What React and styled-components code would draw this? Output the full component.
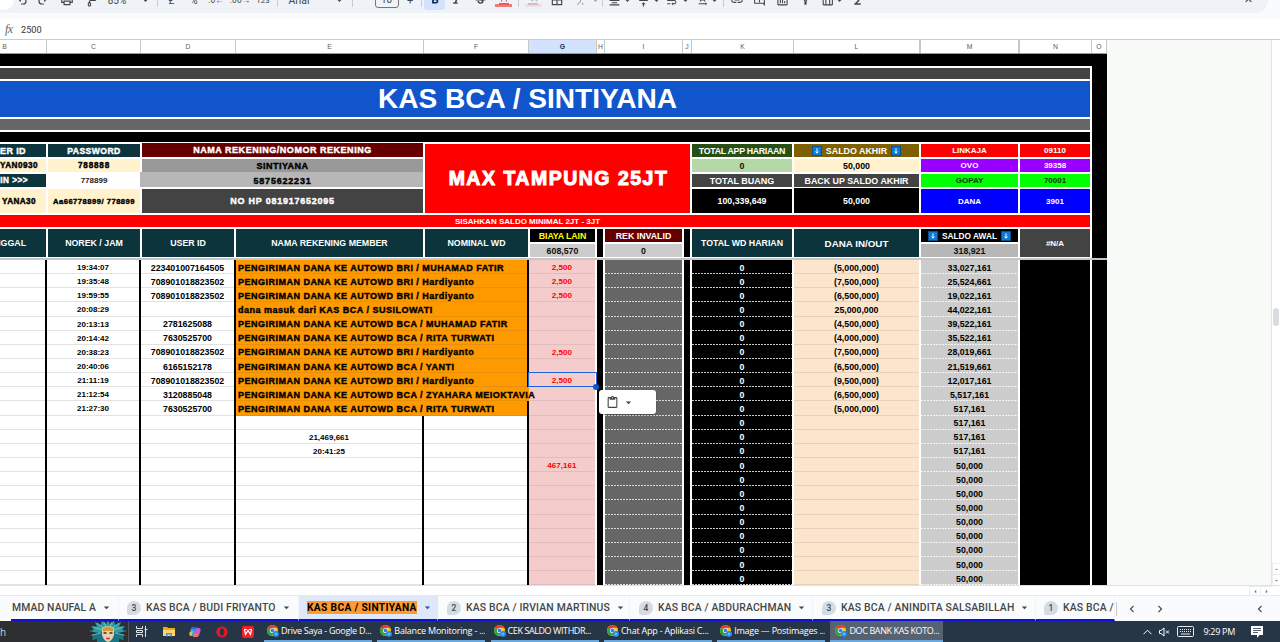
import React from 'react';
import styled, { createGlobalStyle, css } from 'styled-components';
import { Undo2, Redo2, PaintRoller } from 'lucide-react';
import {
    MdOutlinePrint, MdArrowDropDown, MdFormatBold, MdFormatItalic,
    MdStrikethroughS, MdFormatColorText, MdFormatColorFill, MdBorderAll, MdCallMerge, MdFormatAlignCenter,
    MdVerticalAlignCenter, MdWrapText, MdTextRotationNone, MdLink, MdOutlineAddComment, MdInsertChartOutlined,
    MdOutlineFilterAlt, MdOutlineTableChart, MdFunctions, MdExpandLess, MdChevronLeft, MdChevronRight,
    MdArrowDropUp, MdArrowLeft, MdArrowRight, MdContentPaste
} from 'react-icons/md';

const GlobalStyle = createGlobalStyle`
    * { box-sizing: border-box; }
    body {
        margin: 0;
        overflow: hidden;
        background: #fff;
        font-family: 'Liberation Sans', Arial, sans-serif;
    }
`;

const heavy = css`
    -webkit-text-stroke: ${p => (p.$size > 12 ? 1 : 0.4)}px currentColor;
`;

const Page = styled.div`
    width: 1280px;
    height: 642px;
    display: flex;
    flex-direction: column;
    overflow: hidden;
`;

/* toolbar */

const ToolbarArea = styled.div`
    height: 19px;
    flex: none;
    background: #f9fbfd;
    overflow: hidden;
`;

const Toolbar = styled.div`
    width: 1268px;
    height: 13px;
    background: #eff3f8;
    border-radius: 0 0 14px 0;
    overflow: hidden;
`;

const ToolRow = styled.div`
    display: flex;
    align-items: center;
    height: 26px;
    margin-top: -13px;
    color: #444746;
    font-size: 10px;
`;

const Slot = styled.div`
    width: 0;
    flex: none;
    display: flex;
    justify-content: center;
    align-items: center;
    white-space: nowrap;
    font-family: Roboto, sans-serif;
    font-size: ${p => p.$size || 10}px;
    margin-left: ${p => p.$gap}px;
    svg { flex: none; }
`;

const Knob = styled.div`
    width: 20px;
    height: 20px;
    flex: none;
    border-radius: 50%;
    background: #fff;
`;

const Rule = styled.div`
    width: 1px;
    flex: none;
    height: 13px;
    background: #c7cad0;
`;

const SizeBox = styled.div`
    width: 24px;
    height: 16px;
    flex: none;
    border: 1px solid #747775;
    border-radius: 3px;
    text-align: center;
    line-height: 14px;
`;

const Pressed = styled.div`
    width: 21px;
    height: 20px;
    flex: none;
    border-radius: 3px;
    background: #d3e3fd;
    color: #0b2a5b;
    display: flex;
    align-items: center;
    justify-content: center;
`;

const Swatch = styled.div`
    width: 17px;
    height: 13px;
    flex: none;
    display: flex;
    align-items: center;
    justify-content: center;
    border-bottom: 3px solid ${p => p.$color};
    color: ${p => p.$ink};
`;

const FormulaBar = styled.div`
    height: 21px;
    flex: none;
    display: flex;
    align-items: center;
    gap: 6px;
    padding-left: 5px;
    border-bottom: 1px solid #c9cbcd;
    font-family: Roboto, sans-serif;
    font-size: 9.2px;
    color: #333;
`;

const Fx = styled.span`
    width: 10px;
    font-family: 'Liberation Serif', serif;
    font-style: italic;
    font-size: 12px;
    letter-spacing: -0.5px;
    color: #666;
`;

/* sheet */

const Main = styled.div`
    display: flex;
    height: 545px;
    flex: none;
`;

const Sheet = styled.div`
    width: 1107px;
    flex: none;
    overflow: hidden;
`;

const Letters = styled.div`
    display: flex;
    height: 14px;
    border-bottom: 1px solid #9a9a9a;
`;

const Letter = styled.div`
    width: ${p => p.$w}px;
    flex: none;
    border-right: ${p => p.$edge || 1}px solid #c8c8c8;
    background: ${p => (p.$on ? '#d3e3fd' : '#fff')};
    color: ${p => (p.$on ? '#0b2a5b' : '#575b5f')};
    font-size: 6.8px;
    font-weight: ${p => (p.$on ? 700 : 400)};
    line-height: 14px;
    text-align: center;
    padding-right: ${p => p.$shift || 0}px;
`;

const Frozen = styled.div`
    display: flex;
    height: 204px;
    background: #000;
`;

const Board = styled.div`
    width: 1092px;
    margin-top: 12px;
    padding: 2px 2px 1px 0;
    background: #fff;
    display: grid;
    gap: 2px;
    grid-template-columns: 46px 92px 92px 187px 103px 65px 6px 77px 6px 100px 125px 97px 70px;
    grid-template-rows: 11px 36px 11px 10px 13px 13px 13px 24px 12px 13px 13px;
`;

const Box = styled.div`
    grid-column: ${p => p.$c};
    grid-row: ${p => p.$r};
    display: flex;
    align-items: center;
    justify-content: ${p => (p.$end ? 'flex-end' : 'center')};
    min-width: 0;
    overflow: hidden;
    white-space: nowrap;
    gap: 4px;
    background: ${p => p.$bg};
    color: ${p => p.$fg || '#fff'};
    font-size: ${p => p.$size || 9}px;
    font-weight: 700;
    ${p => p.$heavy && heavy}
    letter-spacing: ${p => p.$ls || 0}px;
    padding: ${p => p.$pad || '0'};
    margin: ${p => p.$m || '0'};
`;

const Note = styled.i`
    align-self: flex-start;
    margin-left: auto;
    border-top: 3px solid #f00;
    border-left: 3px solid transparent;
`;

const Center = styled.span`
    margin-left: auto;
    padding-left: 7px;
`;

const Divider = styled.div`
    height: 2px;
    background: #c6c6c8;
`;

const Body = styled.div`
    display: flex;
    height: 325px;
    overflow: hidden;
`;

const Column = styled.div`
    width: ${p => p.$w}px;
    flex: none;
    position: relative;
    z-index: ${p => p.$z || 0};
`;

const Cell = styled.div`
    position: relative;
    z-index: ${p => p.$z || 0};
    height: 14.15px;
    display: flex;
    align-items: center;
    justify-content: ${p => (p.$left ? 'flex-start' : 'center')};
    padding-top: 1px;
    padding-left: ${p => (p.$left ? '2px' : 0)};
    white-space: nowrap;
    border-right: 2px solid ${p => p.$edge};
    background-color: ${p => p.$bg};
    background-image: ${p => p.$line};
    background-size: 100% 1px;
    background-position: 0 100%;
    background-repeat: no-repeat;
    background-origin: padding-box;
    color: ${p => p.$fg || '#000'};
    font-size: ${p => p.$size || 8.8}px;
    font-weight: 700;
    ${p => p.$heavy && heavy}
    letter-spacing: ${p => p.$ls || 0}px;
`;

const Selection = styled.div`
    position: absolute;
    left: -1px;
    top: -1px;
    width: 69px;
    height: 15px;
    border: 1px solid #1a62e0;
`;

const Handle = styled.div`
    position: absolute;
    right: -3px;
    bottom: -4px;
    width: 6px;
    height: 6px;
    border-radius: 50%;
    background: #0b57d0;
`;

const PasteChip = styled.div`
    position: absolute;
    left: 70px;
    top: 17px;
    width: 57px;
    height: 24px;
    border-radius: 3px;
    background: #fff;
    box-shadow: 0 1px 2px rgba(0, 0, 0, 0.3);
    display: flex;
    align-items: center;
    gap: 3px;
    padding-left: 7px;
    color: #444746;
`;

const Blank = styled.div`
    flex: 1;
    background: #f8faf8;
    border-right: 1px solid #e1e3e1;
`;

const Scroller = styled.div`
    width: 8px;
    display: flex;
    flex-direction: column;
    justify-content: space-between;
    background: #fff;
`;

const Thumb = styled.div`
    height: 18px;
    margin: 268px 1px 0;
    border-radius: 4px;
    background: #dadce0;
`;

const ScrollButton = styled.div`
    display: flex;
    align-items: center;
    justify-content: center;
    width: ${p => p.$w}px;
    height: ${p => p.$h}px;
    border: 1px solid #ebedee;
    border-width: 1px 0 0 1px;
    color: #777;
`;

const BottomScroll = styled.div`
    height: 10px;
    flex: none;
    display: flex;
    justify-content: flex-end;
    padding-right: 8px;
    border-top: 1px solid #e1e3e1;
`;

/* sheet tabs */

const TabStrip = styled.div`
    height: 26px;
    flex: none;
    display: flex;
    align-items: stretch;
    padding-left: 11px;
    border-top: 1px solid #e8eaed;
    background: #f9fbfd;
    color: #444746;
`;

const Tab = styled.div`
    width: ${p => p.$w}px;
    flex: none;
    display: flex;
    align-items: center;
    overflow: hidden;
    white-space: nowrap;
    padding-left: ${p => (p.$pad === undefined ? 8 : p.$pad)}px;
    background: ${p => (p.$on ? '#dfe8f8' : 'transparent')};
    border-bottom: 2px solid #0f0fe0;
    border-right: 1px solid ${p => (p.$on ? '#dfe8f8' : '#f1f3f8')};
    font-family: Roboto, sans-serif;
    font-size: 10.4px;
    font-weight: 500;
    letter-spacing: ${p => p.$ls || 0.17}px;
    svg { margin-left: 4px; flex: none; color: ${p => (p.$on ? '#0b57d0' : '#444746')}; }
`;

const Badge = styled.span`
    width: 14px;
    height: 14px;
    flex: none;
    margin-right: 5px;
    border-radius: 7px 7px 7px 2px;
    background: #d3dbe5;
    font-size: 8.5px;
    line-height: 14px;
    text-align: center;
    letter-spacing: 0;
`;

const Marked = styled.span`
    background: #ff9a2e;
    color: #000;
    font-weight: 700;
    font-size: 10.2px;
    line-height: 13px;
    letter-spacing: 0.35px;
`;

const Pager = styled.div`
    flex: 1;
    display: flex;
    align-items: center;
    gap: 14px;
    padding: 0 13px 0 8px;
    svg:last-child { margin-left: auto; }
`;

const PagerRule = styled.div`
    width: 1px;
    height: 14px;
    margin-left: 1px;
    align-self: center;
    background: #c7cad0;
`;

/* taskbar */

const Taskbar = styled.div`
    height: 21px;
    flex: none;
    display: flex;
    background: #273647;
    color: #fff;
    font-family: 'Open Sans', 'Noto Sans', sans-serif;
    font-size: 9px;
`;

const Search = styled.div`
    width: 129px;
    flex: none;
    display: flex;
    align-items: center;
    justify-content: space-between;
    background: #2e2f31;
    border-right: 1px solid #525558;
    padding-right: 1px;
    color: #d0d0d0;
    font-size: 10px;
`;

const Pinned = styled.div`
    width: 135px;
    flex: none;
    display: flex;
    align-items: center;
    justify-content: space-between;
    padding: 0 10px 0 6px;
`;

const Task = styled.div`
    width: ${p => p.$w || 108}px;
    flex: none;
    margin-right: 5.3px;
    display: flex;
    align-items: center;
    gap: 2px;
    padding-left: ${p => (p.$on ? 5 : 3)}px;
    white-space: nowrap;
    overflow: hidden;
    letter-spacing: ${p => p.$ls}px;
    background: ${p => (p.$on ? '#56626f' : 'transparent')};
    border-bottom: 2px solid #6aa9dd;
    svg { flex: none; }
`;

const Tray = styled.div`
    flex: 1;
    display: flex;
    align-items: center;
    justify-content: flex-end;
    gap: 7px;
    padding-right: 17px;
    letter-spacing: -0.3px;
`;

const Clock = styled.span`
    margin: 0 9px 0 2px;
`;

const DownEmoji = () => (
    <svg width="10" height="10" viewBox="0 0 10 10">
        <rect x="0.5" y="0.5" width="9" height="9" fill="#0a7bdc" stroke="#0b4f8e" />
        <path d="M5 2.4v4.4M3.6 5.6L5 7.2l1.4-1.6" stroke="#fff" strokeWidth="1" fill="none" />
    </svg>
);

const Chrome = () => (
    <svg width="12" height="12" viewBox="0 0 24 24">
        <circle cx="11" cy="11" r="11" fill="#fbc116" />
        <path d="M11 11L1.5 5.5A11 11 0 0 1 20.5 5.5H11z" fill="#e33b2e" />
        <path d="M11 11L1.5 5.5A11 11 0 0 0 10 22l5-9z" fill="#2aa14c" />
        <circle cx="11" cy="11" r="5.2" fill="#fff" />
        <circle cx="11" cy="11" r="4" fill="#3b7ded" />
        <circle cx="18" cy="18" r="6" fill="#1e88e5" />
        <path d="M15 18h6M18 15v6" stroke="#9ad8ff" strokeWidth="1.5" />
    </svg>
);

const Mask = () => (
    <svg width="38" height="21" viewBox="0 0 38 21">
        <g fill="#2c9fa6">
            <path d="M19 14L0 10l5-1-3-4 6 1-2-5 6 3 1-4 4 3 2-3 2 3 4-3 1 4 6-3-2 5 6-1-3 4 5 1z" />
            <path d="M19 9L0 15l4 0-1 4 5-1 0 3h22l0-3 5 1-1-4 4 0z" fill="#1c7585" />
        </g>
        <g stroke="#7fd6cf" strokeWidth="0.7">
            <path d="M13 9L5 6M14 7L8 2M17 6l-2-5M25 9l8-3M24 7l6-5M21 6l2-5M12 12l-9 2M26 12l9 2" />
        </g>
        <path d="M13 7q6-4 12 0v7q-2 6-6 7q-4-1-6-7z" fill="#e9cfae" />
        <path d="M13 8q6-5 12 0l-2 3q-1-2-4-1q-3-1-4 1z" fill="#d8962e" />
        <path d="M14.5 12h3M20.500 12h3" stroke="#3b2b2b" strokeWidth="1.4" />
        <path d="M17.200 17.500h3.600" stroke="#c92c35" strokeWidth="1.600" />
    </svg>
);

const TaskView = () => (
    <svg width="13" height="11" viewBox="0 0 13 11" fill="none" stroke="#dfe4ea">
        <path d="M1.500 0v2.500h6V0M1.500 11V8.500h6V11M1.500 4.500h6v2h-6zM10.500 0v11M9.500 3.500h3" />
    </svg>
);

const Folder = () => (
    <svg width="12" height="11" viewBox="0 0 12 11">
        <path d="M0 1h4l1 1h7v8H0z" fill="#e8a92c" />
        <path d="M0 4h12v6H0z" fill="#ffd768" />
        <path d="M3 7h6v3.500H7.500V8.500h-3v2H3z" fill="#3f9be8" />
    </svg>
);

const Copilot = () => (
    <svg width="12" height="12" viewBox="0 0 12 12">
        <path d="M4 1h4L5.500 10H2.500Q0 10 .5 7L2 3Q2.500 1 4 1z" fill="#27a6e0" />
        <path d="M1 6l3-1-1.500 5Q0 10 .5 7z" fill="#f0b93a" />
        <path d="M8 11H4L6.500 2h3Q12 2 11.500 5L10 9Q9.500 11 8 11z" fill="#c35be0" />
        <path d="M8 11H4l1-4 5 1z" fill="#f0715c" />
        <path d="M4 1h4l-.6 2.200L3 3z" fill="#2b5fd9" />
    </svg>
);

const Opera = () => (
    <svg width="12" height="12" viewBox="0 0 12 12">
        <circle cx="6" cy="6" r="5.600" fill="#e8152b" />
        <ellipse cx="6" cy="6" rx="2.200" ry="3.800" fill="#273647" />
    </svg>
);

const Wps = () => (
    <svg width="12" height="12" viewBox="0 0 12 12">
        <rect width="12" height="12" rx="2" fill="#f0202c" />
        <path d="M2 3.500h3M2.500 3.500l1 5 2.500-4 2.500 4 1-5M7 3.500h3" stroke="#fff" strokeWidth="1.200" fill="none" />
    </svg>
);

const Keyboard = () => (
    <svg width="17" height="11" viewBox="0 0 17 11" fill="none" stroke="#e8ebee">
        <rect x="0.500" y="0.500" width="16" height="10" rx="1" />
        <path d="M3 3.500h11M3 5.500h11" strokeDasharray="1 1" />
        <path d="M4 8h9" />
    </svg>
);

const Speaker = () => (
    <svg width="11" height="10" viewBox="0 0 11 10" fill="none" stroke="#fff">
        <path d="M.5 3.500H2L5 1v8L2 6.500H.5zM7 3.500l3 3M10 3.500l-3 3" />
    </svg>
);

const Bubble = () => (
    <svg width="12" height="12" viewBox="0 0 12 12">
        <path d="M0 0h12v9H8.500L6 12V9H0z" fill="#fff" />
        <path d="M2 2.500h8M2 4.500h8M2 6.500h5" stroke="#273647" strokeWidth=".8" />
    </svg>
);

const TrayArrow = () => (
    <svg width="9" height="6" viewBox="0 0 9 6" fill="none" stroke="#fff">
        <path d="M.5 5.200l4-4 4 4" />
    </svg>
);

const caret = <MdArrowDropDown size={11} />;
const rule = <Rule />;

// [center x, content, font size]
const tools = [
    [4, <Knob />],
    [22, <Undo2 size={12} strokeWidth={2.4} />],
    [43, <Redo2 size={12} strokeWidth={2.4} />],
    [66.5, <MdOutlinePrint size={14} />],
    [90.5, <PaintRoller size={13} />],
    [117, '85%'],
    [145, caret],
    [157.5, rule],
    [171.5, '£'],
    [194, '%'],
    [216, '.0←', 8.5],
    [240, '.00→', 8.5],
    [263, '123', 8],
    [277.5, rule],
    [299, 'Arial', 10.4],
    [339, caret],
    [352.5, rule],
    [386.5, <SizeBox>10</SizeBox>],
    [410, '+', 11],
    [421.5, rule],
    [434.5, <Pressed><MdFormatBold size={14} /></Pressed>],
    [456.5, <MdFormatItalic size={13} />],
    [480, <MdStrikethroughS size={13} />],
    [503.5, <Swatch $color="#ee7a7a" $ink="#e06060"><MdFormatColorText size={12} /></Swatch>],
    [518, rule],
    [533, <Swatch $color="#f3dcde" $ink="#c9c0c4"><MdFormatColorFill size={12} /></Swatch>],
    [556.5, <MdBorderAll size={14} />],
    [580, <MdCallMerge size={13} color="#aaa" />],
    [595, <MdArrowDropDown size={11} color="#aaa" />],
    [602.5, rule],
    [614.5, <MdFormatAlignCenter size={13} />],
    [627.5, caret],
    [643.5, <MdVerticalAlignCenter size={13} />],
    [656, caret],
    [671.5, <MdWrapText size={13} />],
    [685.5, caret],
    [702, <MdTextRotationNone size={13} />],
    [714, caret],
    [723.5, rule],
    [737, <MdLink size={14} />],
    [759.5, <MdOutlineAddComment size={13} />],
    [782, <MdInsertChartOutlined size={13} />],
    [805, <MdOutlineFilterAlt size={13} />],
    [827, <MdOutlineTableChart size={13} />],
    [839.5, caret],
    [857, <MdFunctions size={13} />],
    [1248.5, <MdExpandLess size={13} />]
];

const letters = [
    ['B', 47, 37], ['C', 94], ['D', 95], ['E', 188], ['F', 105], ['G', 68], ['H', 8], ['I', 78], ['J', 9],
    ['K', 102], ['L', 127], ['M', 99], ['N', 72], ['O', 15]
];

const solid = c => `linear-gradient(${c}, ${c})`;
const dots = c => `repeating-linear-gradient(90deg, ${c} 0 2px, transparent 2px 3px)`;

const times = ['19:34:07', '19:35:48', '19:59:55', '20:08:29', '20:13:13', '20:14:42', '20:38:23', '20:40:06',
    '21:11:19', '21:12:54', '21:27:30'];

const users = ['223401007164505', '708901018823502', '708901018823502', '', '2781625088', '7630525700',
    '708901018823502', '6165152178', '708901018823502', '3120885048', '7630525700'];

const names = [
    'PENGIRIMAN DANA KE AUTOWD BRI / MUHAMAD FATIR',
    'PENGIRIMAN DANA KE AUTOWD BRI / Hardiyanto',
    'PENGIRIMAN DANA KE AUTOWD BRI / Hardiyanto',
    'dana masuk dari KAS BCA / SUSILOWATI',
    'PENGIRIMAN DANA KE AUTOWD BCA / MUHAMAD FATIR',
    'PENGIRIMAN DANA KE AUTOWD BCA / RITA TURWATI',
    'PENGIRIMAN DANA KE AUTOWD BRI / Hardiyanto',
    'PENGIRIMAN DANA KE AUTOWD BCA / YANTI',
    'PENGIRIMAN DANA KE AUTOWD BRI / Hardiyanto',
    'PENGIRIMAN DANA KE AUTOWD BCA / ZYAHARA MEIOKTAVIA',
    'PENGIRIMAN DANA KE AUTOWD BCA / RITA TURWATI'
];

const extra = { 12: '21,469,661', 13: '20:41:25' };
const fees = { 0: '2,500', 1: '2,500', 2: '2,500', 6: '2,500', 8: '2,500', 14: '467,161' };

const flows = ['(5,000,000)', '(7,500,000)', '(6,500,000)', '25,000,000', '(4,500,000)', '(4,000,000)',
    '(7,500,000)', '(6,500,000)', '(9,500,000)', '(6,500,000)', '(5,000,000)'];

const balances = ['33,027,161', '25,524,661', '19,022,161', '44,022,161', '39,522,161', '35,522,161', '28,019,661',
    '21,519,661', '12,017,161', '5,517,161', '517,161', '517,161', '517,161', '517,161'];

const rows = Array.from({ length: 23 }, (_, i) => i);
const white = { $bg: '#fff', $edge: '#000', $line: solid('#e2e2e2') };
const orange = { $bg: '#ff9900', $edge: '#ff9900', $line: solid('#e88f0c') };
const black = { $bg: '#000', $edge: '#fff', $line: 'none' };

const teal = '#0c343d';
const cream = '#fff2cc';

// [title, letter spacing]
const tasks = [
    ['Drive Saya - Google D...', -0.27],
    ['Balance Monitoring - ...', -0.2],
    ['CEK SALDO WITHDR...', -0.42],
    ['Chat App - Aplikasi C...', -0.22],
    ['Image — Postimages ...', -0.25]
];

const SheetHead = () => (
    <Frozen>
        <Board>
            <Box $c="1 / -1" $r="1" $bg="#434343" />
            <Box $c="1 / -1" $r="2" $bg="#1155cc" $size={28.1} $pad="0 35px 0 0">KAS BCA / SINTIYANA</Box>
            <Box $c="1 / -1" $r="3" $bg="#666666" />
            <Box $c="1 / -1" $r="4" $bg="#000" />

            <Box $c="1" $r="5" $bg={teal} $heavy $size={9} $ls={0.4} $end $pad="0 20px 0 0">ER ID</Box>
            <Box $c="1" $r="6" $bg={cream} $fg="#000" $heavy $size={8.2} $ls={0.45} $end $pad="0 8px 0 0">YAN0930</Box>
            <Box $c="1" $r="7" $bg={teal} $heavy $size={8.2} $ls={0.5} $end $pad="0 18px 0 0">IN &gt;&gt;&gt;</Box>
            <Box $c="1" $r="8" $bg={cream} $fg="#000" $heavy $size={8.2} $ls={0.4} $end $pad="0 10px 0 0">YANA30</Box>

            <Box $c="2" $r="5" $bg={teal} $heavy $size={8.6} $ls={0.45}>PASSWORD</Box>
            <Box $c="2" $r="6" $bg={cream} $fg="#000" $heavy $size={8.2} $ls={0.8}>788888</Box>
            <Box $c="2" $r="7" $bg="#fff" $fg="#222" $size={8}>778899</Box>
            <Box $c="2" $r="8" $bg={cream} $fg="#000" $heavy $size={7.6} $ls={0.5}>Aa66778899/ 778899</Box>

            <Box $c="3 / 5" $r="5" $bg="#660000" $heavy $size={9} $ls={0.53} $m="-1px 0 0 0">NAMA REKENING/NOMOR REKENING</Box>
            <Box $c="3 / 5" $r="6" $bg="#999999" $fg="#000" $heavy $size={9} $ls={0.5}>SINTIYANA</Box>
            <Box $c="3 / 5" $r="7" $bg="#b7b7b7" $fg="#000" $heavy $size={9} $ls={0.8} $m="-2px 0 0 -2px" $pad="2px 0 0 2px">5875622231</Box>
            <Box $c="3 / 5" $r="8" $bg="#434343" $heavy $size={9} $ls={0.75}>NO HP 081917652095</Box>

            <Box $c="5 / 10" $r="5 / 9" $bg="#ff0000" $heavy $size={19.5} $ls={1.5} $pad="0 0 0 2px">MAX TAMPUNG 25JT</Box>

            <Box $c="10" $r="5" $bg="#274e13" $size={8.8} $ls={-0.3}>TOTAL APP HARIAAN</Box>
            <Box $c="10" $r="6" $bg="#b6d7a8" $fg="#111" $size={8.8}>0</Box>
            <Box $c="10" $r="7" $bg="#434343" $size={9}>TOTAL BUANG</Box>
            <Box $c="10" $r="8" $bg="#000" $size={8.8}>100,339,649</Box>

            <Box $c="11" $r="5" $bg="#7f6000" $size={8.9}><DownEmoji />SALDO AKHIR<DownEmoji /></Box>
            <Box $c="11" $r="6" $bg={cream} $fg="#000" $size={8.8}>50,000</Box>
            <Box $c="11" $r="7" $bg="#434343" $size={8.9}>BACK UP SALDO AKHIR</Box>
            <Box $c="11" $r="8" $bg="#000" $size={8.8} $m="-1px 0 0 0">50,000</Box>

            <Box $c="12" $r="5" $bg="#ff0000" $size={8}>LINKAJA</Box>
            <Box $c="12" $r="6" $bg="#9900ff" $size={8}>OVO</Box>
            <Box $c="12" $r="7" $bg="#00ff00" $fg="#063806" $size={8}>GOPAY</Box>
            <Box $c="12" $r="8" $bg="#0000ff" $size={8}>DANA</Box>
            <Box $c="13" $r="5" $bg="#ff0000" $size={8}>09110</Box>
            <Box $c="13" $r="6" $bg="#9900ff" $size={8}>39358</Box>
            <Box $c="13" $r="7" $bg="#00ff00" $fg="#063806" $size={8}>70001</Box>
            <Box $c="13" $r="8" $bg="#0000ff" $size={8}>3901</Box>

            <Box $c="1 / -1" $r="9" $bg="#ff0000" $size={8} $pad="1px 35px 0 0">SISAHKAN SALDO MINIMAL 2JT - 3JT</Box>

            <Box $c="1" $r="10 / 12" $bg={teal} $size={8.8} $end $pad="0 20px 0 0">NGGAL</Box>
            <Box $c="2" $r="10 / 12" $bg={teal} $size={8.8}>NOREK / JAM</Box>
            <Box $c="3" $r="10 / 12" $bg={teal} $size={8.8}>USER ID</Box>
            <Box $c="4" $r="10 / 12" $bg={teal} $size={8.8}>NAMA REKENING MEMBER</Box>
            <Box $c="5" $r="10 / 12" $bg={teal} $size={8.8}>NOMINAL WD</Box>
            <Box $c="6" $r="10" $bg="#000" $fg="#ffff00" $size={8.8} $ls={-0.1}>BIAYA LAIN</Box>
            <Box $c="6" $r="11" $bg="#cccccc" $fg="#111" $size={8.8}>608,570</Box>
            <Box $c="7" $r="10 / 12" $bg="#000" />
            <Box $c="8" $r="10" $bg="#660000" $size={8.8}>REK INVALID</Box>
            <Box $c="8" $r="11" $bg="#cccccc" $fg="#111" $size={8.8}>0</Box>
            <Box $c="9" $r="10 / 12" $bg="#000" />
            <Box $c="10" $r="10 / 12" $bg={teal} $size={8.8}>TOTAL WD HARIAN</Box>
            <Box $c="11" $r="10 / 12" $bg={teal} $size={9.8}>DANA IN/OUT</Box>
            <Box $c="12" $r="10" $bg="#000" $size={8.3}><DownEmoji />SALDO AWAL<DownEmoji /></Box>
            <Box $c="12" $r="11" $bg="#b7b7b7" $fg="#111" $size={8.8}>318,921</Box>
            <Box $c="13" $r="10 / 12" $bg="#434343" $size={8}><Center>#N/A</Center><Note /></Box>
        </Board>
    </Frozen>
);

const SheetBody = () => (
    <Body>
        <Column $w={47}>{rows.map(i => <Cell key={i} {...white} />)}</Column>
        <Column $w={94}>{rows.map(i => <Cell key={i} {...white} $size={8}>{times[i]}</Cell>)}</Column>
        <Column $w={95}>{rows.map(i => <Cell key={i} {...white}>{users[i]}</Cell>)}</Column>
        <Column $w={188} $z={2}>
            {rows.map(i => (
                i < 11
                    ? <Cell key={i} {...orange} $left $heavy $size={9} $ls={0.49}>{names[i]}</Cell>
                    : <Cell key={i} {...white} $size={8}>{extra[i]}</Cell>
            ))}
        </Column>
        <Column $w={105}>
            {rows.map(i => <Cell key={i} {...(i < 11 ? orange : white)} $edge={i === 9 ? '#ff9900' : '#000'} />)}
        </Column>
        <Column $w={68} $z={1}>
            {rows.map(i => (
                <Cell key={i} $z={i === 8 ? 1 : 0} $bg="#f4cccc" $edge="#fff" $line={solid('#e0bcbc')} $fg="#ff0000" $size={8.1}>
                    {fees[i]}
                    {i === 8 && (
                        <>
                            <PasteChip><MdContentPaste size={13} /><MdArrowDropDown size={13} /></PasteChip>
                            <Selection><Handle /></Selection>
                        </>
                    )}
                </Cell>
            ))}
        </Column>
        <Column $w={8}>{rows.map(i => <Cell key={i} {...black} />)}</Column>
        <Column $w={79}>{rows.map(i => <Cell key={i} $bg="#666666" $edge="#fff" $line={dots('#d8d8d8')} />)}</Column>
        <Column $w={8}>{rows.map(i => <Cell key={i} {...black} />)}</Column>
        <Column $w={102}>
            {rows.map(i => <Cell key={i} $bg="#000" $edge="#fff" $fg="#fff" $line={dots('#c8c8c8')}>0</Cell>)}
        </Column>
        <Column $w={127}>
            {rows.map(i => <Cell key={i} $bg="#fce5cd" $edge="#fff" $line={solid('#e6d1bb')}>{flows[i]}</Cell>)}
        </Column>
        <Column $w={99}>
            {rows.map(i => (
                <Cell key={i} $bg="#cccccc" $edge="#fff" $line={dots('#f4f4f4')}>{balances[i] || '50,000'}</Cell>
            ))}
        </Column>
        <Column $w={72}>{rows.map(i => <Cell key={i} {...black} />)}</Column>
        <Column $w={15}>{rows.map(i => <Cell key={i} {...black} $edge="#000" />)}</Column>
    </Body>
);

const App = () => {
    return (
        <Page>
            <GlobalStyle />
            <ToolbarArea>
                <Toolbar>
                    <ToolRow>
                        {tools.map(([x, content, size], i) => (
                            <Slot key={x} $gap={x - (i ? tools[i - 1][0] : 0)} $size={size}>{content}</Slot>
                        ))}
                    </ToolRow>
                </Toolbar>
            </ToolbarArea>
            <FormulaBar><Fx>fx</Fx>2500</FormulaBar>

            <Main>
                <Sheet>
                    <Letters>
                        {letters.map(([name, w, shift]) => (
                            <Letter key={name} $w={w} $shift={shift} $on={name === 'G'} $edge={'LM'.includes(name) ? 2 : 1}>
                                {name}
                            </Letter>
                        ))}
                    </Letters>
                    <SheetHead />
                    <Divider />
                    <SheetBody />
                </Sheet>
                <Blank />
                <Scroller>
                    <Thumb />
                    <div>
                        <ScrollButton $w={8} $h={11}><MdArrowDropUp size={9} /></ScrollButton>
                        <ScrollButton $w={8} $h={11}><MdArrowDropDown size={9} /></ScrollButton>
                    </div>
                </Scroller>
            </Main>
            <BottomScroll>
                <ScrollButton $w={11} $h={9}><MdArrowLeft size={9} /></ScrollButton>
                <ScrollButton $w={12} $h={9}><MdArrowRight size={9} /></ScrollButton>
            </BottomScroll>

            <TabStrip>
                <Tab $w={108} $pad={1} $ls={0.12}>MMAD NAUFAL A<MdArrowDropDown size={13} /></Tab>
                <Tab $w={180}><Badge>3</Badge>KAS BCA / BUDI FRIYANTO<MdArrowDropDown size={13} /></Tab>
                <Tab $w={139} $on><Marked>KAS BCA / SINTIYANA</Marked><MdArrowDropDown size={13} /></Tab>
                <Tab $w={192} $pad={9}><Badge>2</Badge>KAS BCA / IRVIAN MARTINUS<MdArrowDropDown size={13} /></Tab>
                <Tab $w={183} $pad={9}><Badge>4</Badge>KAS BCA / ABDURACHMAN<MdArrowDropDown size={13} /></Tab>
                <Tab $w={223} $pad={9}><Badge>3</Badge>KAS BCA / ANINDITA SALSABILLAH<MdArrowDropDown size={13} /></Tab>
                <Tab $w={79} $pad={8}><Badge>1</Badge>KAS BCA /</Tab>
                <PagerRule />
                <Pager>
                    <MdChevronLeft size={14} />
                    <MdChevronRight size={14} />
                    <MdChevronLeft size={14} />
                </Pager>
            </TabStrip>

            <Taskbar>
                <Search><span>h</span><Mask /></Search>
                <Pinned><TaskView /><Folder /><Copilot /><Opera /><Wps /></Pinned>
                {tasks.map(([title, ls]) => <Task key={title} $ls={ls}><Chrome />{title}</Task>)}
                <Task $on $w={113} $ls={-0.4}><Chrome />DOC BANK KAS KOTO...</Task>
                <Tray><TrayArrow /><Speaker /><Keyboard /><Clock>9:29 PM</Clock><Bubble /></Tray>
            </Taskbar>
        </Page>
    );
};

export default App;
